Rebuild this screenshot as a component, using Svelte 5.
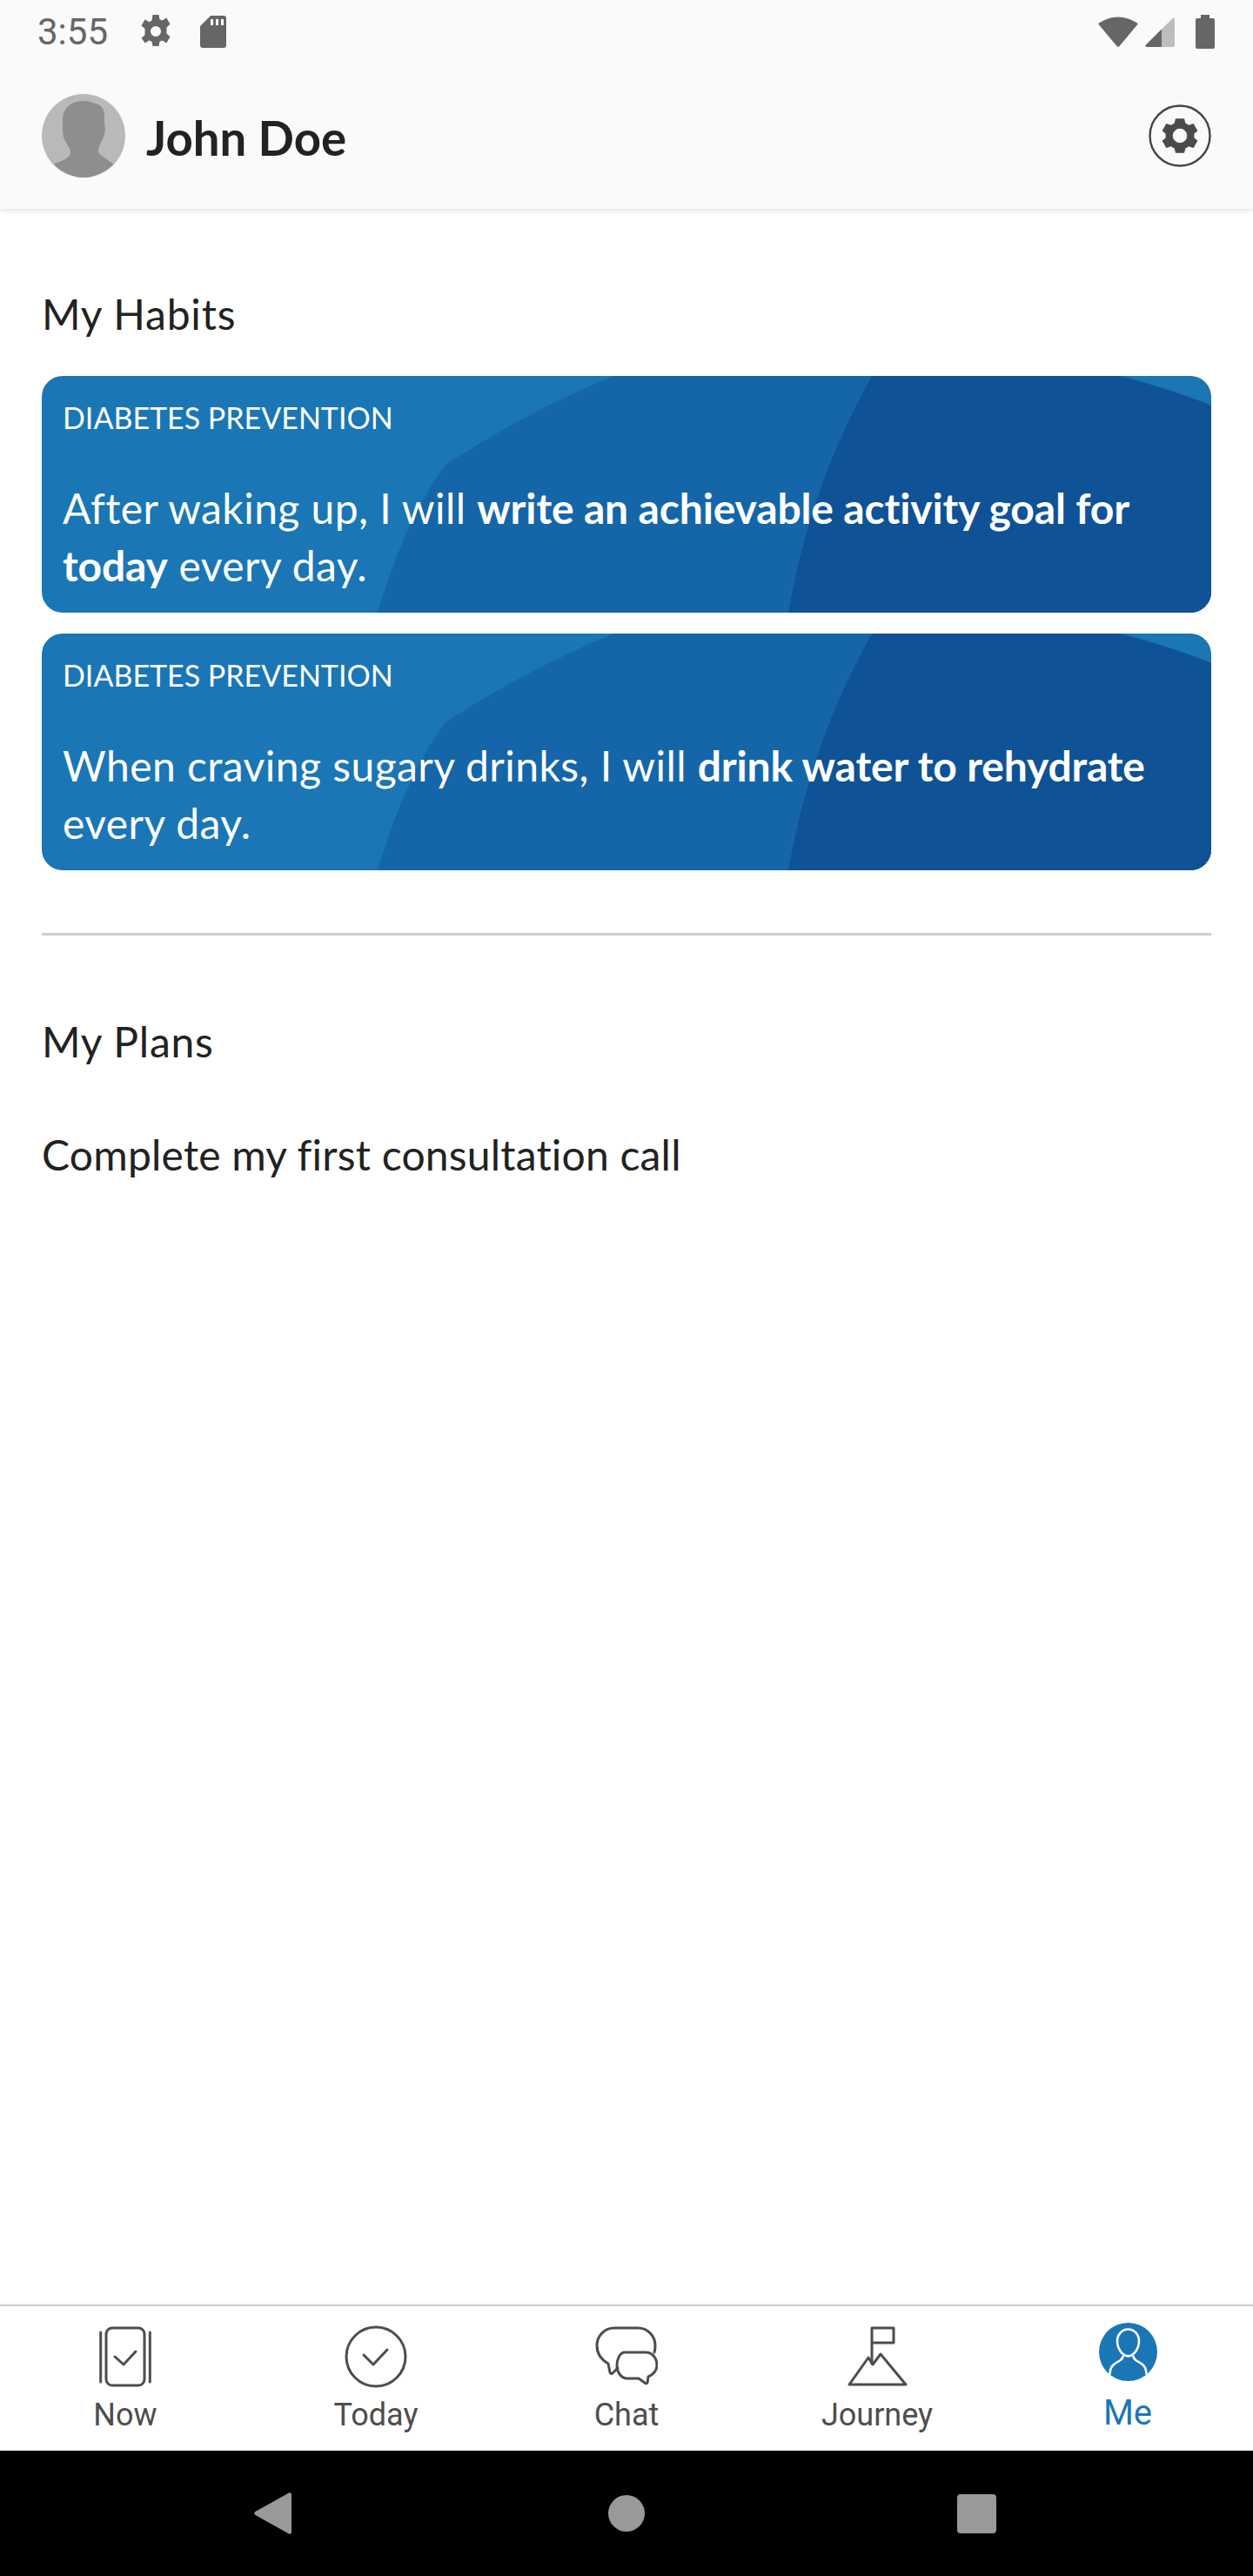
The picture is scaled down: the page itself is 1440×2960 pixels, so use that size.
<script>
  const habits = [
    { pre: 'After waking up, I will ', bold: 'write an achievable activity goal for today', post: ' every day.' },
    { pre: 'When craving sugary drinks, I will ', bold: 'drink water to rehydrate', post: ' every day.' }
  ];
</script>

<div class="screen">
  <header class="top">
    <div class="status">
      <div class="status-left">
        <span class="time">3:55</span>
        <svg class="st-gear" viewBox="0 0 38 38" aria-hidden="true">
          <path fill="#666" fill-rule="evenodd" d="M15.500 0h7l1 5.200 3.200 1.400 4.600-3 4.200 7.200-4 3.600v7.200l4 3.600-4.200 7.200-4.600-3-3.200 1.400-1 5.200h-7l-1-5.200-3.200-1.400-4.600 3L2.500 26.800l4-3.600v-7.200l-4-3.600L6.700 5.200l4.600 3 3.200-1.400z M19 13a6 6 0 1 0 0 12 6 6 0 0 0 0-12z"/>
        </svg>
        <svg class="st-sd" viewBox="0 0 30 37" aria-hidden="true">
          <path fill="#666" fill-rule="evenodd" d="M12 0h15a3 3 0 0 1 3 3v31a3 3 0 0 1-3 3H3a3 3 0 0 1-3-3V12z M12 4v7h3V4z M18 4v7h3V4z M24 4v7h3V4z"/>
        </svg>
      </div>
      <div class="status-right">
        <svg class="st-wifi" viewBox="0 0 46 36" aria-hidden="true">
          <path fill="#666" d="M1 8.500Q23-5.500 45 8.500a1.200 1.200 0 0 1 .2 1.800L24.500 35a2 2 0 0 1-3 0L.8 10.300A1.200 1.200 0 0 1 1 8.500z"/>
        </svg>
        <svg class="st-signal" viewBox="0 0 34 34" aria-hidden="true">
          <path fill="#bdbdbd" d="M19 13.500 32 .8c.8-.8 2-.3 2 .8V32a2 2 0 0 1-2 2H19z"/>
          <path fill="#666" d="M19 13.500V34H2c-1.500 0-2.200-1.500-1.200-2.500z"/>
        </svg>
        <svg class="st-batt" viewBox="0 0 22 39" aria-hidden="true">
          <path fill="#666" d="M6 0h10v4h4a2 2 0 0 1 2 2v31a2 2 0 0 1-2 2H2a2 2 0 0 1-2-2V6a2 2 0 0 1 2-2h4z"/>
        </svg>
      </div>
    </div>
    <div class="title-row">
      <div class="identity">
        <svg class="avatar" viewBox="0 0 96 96" aria-hidden="true">
          <circle cx="48" cy="48" r="48" fill="#b9b9b9"/>
          <path fill="#8e8e8e" d="M48 8c7 0 9 2 14 3 7 2 10 7 10 14 0 5 0 8 .5 12 .5 3 .5 5-.5 9-1.500 6-6 12-7 18-.5 3 1 5 4 7 4 3 8 6 13.500 9.500C73 90 61 96 48 96c-13 0-25-6-34-15.500 5-2.500 9-3 14-6.500 2-1.500 5-4 5-6 0-3-1-6-3.500-9.500-2.500-4-4.500-8-5-11.500C24 42 24 37 24 30 24 17 33 8 48 8z"/>
        </svg>
        <span class="name">John Doe</span>
      </div>
      <svg class="settings" viewBox="0 0 72 72" aria-hidden="true">
        <circle cx="36" cy="36" r="34.500" fill="none" stroke="#444" stroke-width="2.400"/>
        <g transform="translate(14.400 14.400) scale(1.800)">
          <path fill="#4a4a4a" fill-rule="evenodd" d="M9.200 1h5.600l.7 3 2.200 1.200 3-1 2.600 4.600-2.200 2v2.400l2.200 2-2.600 4.600-3-1-2.200 1.200-.7 3H9.200l-.7-3-2.200-1.200-3 1L.7 15.200l2.200-2v-2.400l-2.200-2 2.600-4.600 3 1 2.200-1.200z M12 7.400a4.600 4.600 0 1 0 0 9.200 4.600 4.600 0 0 0 0-9.200z"/>
        </g>
      </svg>
    </div>
  </header>

  <main class="content">
    <h2 class="section first">My Habits</h2>
    <div class="cards">
      {#each habits as h}
        <article class="card">
          <svg class="card-bg" viewBox="0 0 1344 272" preserveAspectRatio="none" aria-hidden="true">
            <path fill="#1566a8" d="M386 272C405 205 435 140 464 102 560 40 640 5 709 -20 900 -70 1160 -40 1344 34V272z"/>
            <path fill="#0f5295" d="M858 272C880 150 915 70 957 -5L1237 0C1280 11 1315 22 1344 34V272z"/>
          </svg>
          <div class="card-text">
            <div class="tag">DIABETES PREVENTION</div>
            <p class="habit">{h.pre}<strong>{h.bold}</strong>{h.post}</p>
          </div>
        </article>
      {/each}
    </div>
    <hr class="rule" />
    <h2 class="section plans">My Plans</h2>
    <p class="plan">Complete my first consultation call</p>
  </main>

  <nav class="tabs">
    <div class="tab">
      <svg class="ico" viewBox="0 0 72 72" aria-hidden="true">
        <g fill="none" stroke="#4d4d4d" stroke-width="3" stroke-linecap="round" stroke-linejoin="round">
          <rect x="14" y="3" width="44" height="66" rx="7"/>
          <path d="M7.700 8v57M64.300 8v57"/>
          <path d="M24 36l10 9 14-15"/>
        </g>
      </svg>
      <span class="lbl">Now</span>
    </div>
    <div class="tab">
      <svg class="ico" viewBox="0 0 72 72" aria-hidden="true">
        <g fill="none" stroke="#4d4d4d" stroke-width="3" stroke-linecap="round" stroke-linejoin="round">
          <circle cx="36" cy="36" r="34"/>
          <path d="M22 34l11 11 16-17"/>
        </g>
      </svg>
      <span class="lbl">Today</span>
    </div>
    <div class="tab">
      <svg class="ico" viewBox="0 0 72 72" aria-hidden="true">
        <g fill="none" stroke="#4d4d4d" stroke-width="3" stroke-linecap="round" stroke-linejoin="round">
          <path d="M68 31C69 28 69 26 69 23 69 12 60 3 49 3H22C11 3 2 12 2 23 2 33 8 40 15 44L17 54C18 56 19 56 20 55L26 49"/>
          <path d="M34 31H58C66 31 71 38 71 46 71 52 66 57 61 59L60 66C59 67 58 67 57 66L50 61H37C30 61 25 54 25 46 25 38 29 31 34 31z"/>
        </g>
      </svg>
      <span class="lbl">Chat</span>
    </div>
    <div class="tab">
      <svg class="ico" viewBox="0 0 72 72" aria-hidden="true">
        <g fill="none" stroke="#4d4d4d" stroke-width="3" stroke-linecap="round" stroke-linejoin="round">
          <path d="M30 3h25v17H30zM30 20v24"/>
          <path d="M4 68L26 37l5 8 9-12 29 35z"/>
        </g>
      </svg>
      <span class="lbl">Journey</span>
    </div>
    <div class="tab active">
      <svg class="ico me" viewBox="0 0 67 67" aria-hidden="true">
        <circle cx="33.500" cy="33.500" r="33.500" fill="#1a76b5"/>
        <g fill="none" stroke="#fff" stroke-width="2.600">
          <path d="M33.500 7.500c-7 0-12.500 6-12.500 13.500 0 6 2.500 11 6 14.500 2 1.800 4 2.900 6.500 2.900s4.500-1.100 6.500-2.900c3.500-3.500 6-8.500 6-14.500 0-7.500-5.500-13.500-12.500-13.500z"/>
          <path d="M27.500 38c0 3-1 4-3.500 5.500-5 3-11.500 5-11.500 16M39.500 38c0 3 1 4 3.500 5.500 5 3 11.500 5 11.500 16"/>
        </g>
      </svg>
      <span class="lbl">Me</span>
    </div>
  </nav>

  <footer class="sysnav">
    <svg class="back" viewBox="0 0 43 48" aria-hidden="true">
      <path fill="#999" d="M40 .5c1.500-.8 3 .2 3 2v43c0 1.800-1.500 2.800-3 2L1.500 26c-1.800-1-1.800-3 0-4z"/>
    </svg>
    <span class="home"></span>
    <span class="recent"></span>
  </footer>
</div>

<style>
  :global(body) {
    margin: 0;
    background: #fff;
  }
  .screen {
    width: 1440px;
    height: 2960px;
    display: flex;
    flex-direction: column;
    background: #fff;
    font-family: Lato, "Open Sans", sans-serif;
    color: #222;
    overflow: hidden;
  }
  .top {
    height: 240px;
    box-sizing: border-box;
    background: #fafafa;
    box-shadow: 0 2px 6px rgba(0, 0, 0, 0.12);
    position: relative;
    flex: none;
  }
  .status {
    height: 72px;
    display: flex;
    justify-content: space-between;
    align-items: center;
    padding: 0 44px 0 43px;
  }
  .status-left,
  .status-right {
    display: flex;
    align-items: center;
  }
  .time {
    font-family: Roboto, sans-serif;
    font-size: 42px;
    color: #666;
    width: 117px;
  }
  .st-gear { width: 38px; height: 38px; }
  .st-sd { width: 30px; height: 37px; margin-left: 32px; }
  .st-wifi { width: 46px; height: 36px; }
  .st-signal { width: 34px; height: 34px; margin-left: 8px; margin-top: 2px; }
  .st-batt { width: 22px; height: 39px; margin-left: 24px; }
  .title-row {
    height: 96px;
    margin-top: 36px;
    padding: 0 48px;
    display: flex;
    justify-content: space-between;
    align-items: center;
  }
  .identity {
    display: flex;
    align-items: center;
    gap: 24px;
  }
  .avatar { width: 96px; height: 96px; display: block; }
  .name {
    font-size: 54.500px;
    font-weight: 700;
    color: #222;
    margin-top: 4px;
  }
  .settings { width: 72px; height: 72px; }
  .content {
    flex: 1;
    padding: 0 48px;
    min-height: 0;
  }
  .section {
    margin: 0;
    font-size: 48px;
    font-weight: 400;
    line-height: 60px;
    letter-spacing: 0.8px;
    color: #222;
  }
  .first { margin-top: 91px; }
  .cards {
    margin-top: 41px;
    display: flex;
    flex-direction: column;
    gap: 24px;
  }
  .card {
    height: 272px;
    border-radius: 24px;
    background: #1a76b5;
    position: relative;
    overflow: hidden;
    color: #fff;
  }
  .card-bg {
    position: absolute;
    inset: 0;
    width: 100%;
    height: 100%;
  }
  .card-text {
    position: relative;
    padding: 28px 24px 0;
  }
  .tag {
    font-size: 34px;
    line-height: 40px;
  }
  .habit {
    margin: 51px 0 0;
    font-size: 48px;
    line-height: 66px;
    letter-spacing: 0.45px;
  }
  .habit strong {
    font-weight: 700;
    letter-spacing: -0.15px;
  }
  .rule {
    border: 0;
    height: 3px;
    background: #ccc;
    margin: 72px 0 0;
  }
  .plans { margin-top: 92px; }
  .plan {
    margin: 70px 0 0;
    font-size: 48px;
    line-height: 60px;
    letter-spacing: 0.2px;
  }
  .tabs {
    height: 168px;
    box-sizing: border-box;
    border-top: 2px solid #ccc;
    box-shadow: 0 -3px 4px rgba(0, 0, 0, 0.03);
    display: grid;
    grid-template-columns: repeat(5, 288px);
    background: #fff;
    flex: none;
    position: relative;
  }
  .tab {
    display: flex;
    flex-direction: column;
    align-items: center;
    color: #4d4d4d;
    font-family: Roboto, sans-serif;
  }
  .ico {
    width: 72px;
    height: 72px;
    margin-top: 22px;
    display: block;
  }
  .lbl {
    font-size: 36px;
    line-height: 42px;
    margin-top: 10px;
  }
  .active { color: #1a76b5; }
  .active .me {
    width: 67px;
    height: 67px;
    margin-top: 19px;
  }
  .active .lbl {
    font-size: 40px;
    line-height: 46px;
    margin-top: 14px;
  }
  .sysnav {
    height: 144px;
    background: #000;
    flex: none;
    display: grid;
    grid-template-columns: 408px 406px 398px;
    align-items: center;
    justify-items: center;
    padding-left: 109px;
    box-sizing: border-box;
  }
  .back { width: 43px; height: 48px; }
  .home {
    width: 42px;
    height: 42px;
    border-radius: 50%;
    background: #999;
  }
  .recent {
    width: 45px;
    height: 45px;
    border-radius: 4px;
    background: #999;
  }
</style>
